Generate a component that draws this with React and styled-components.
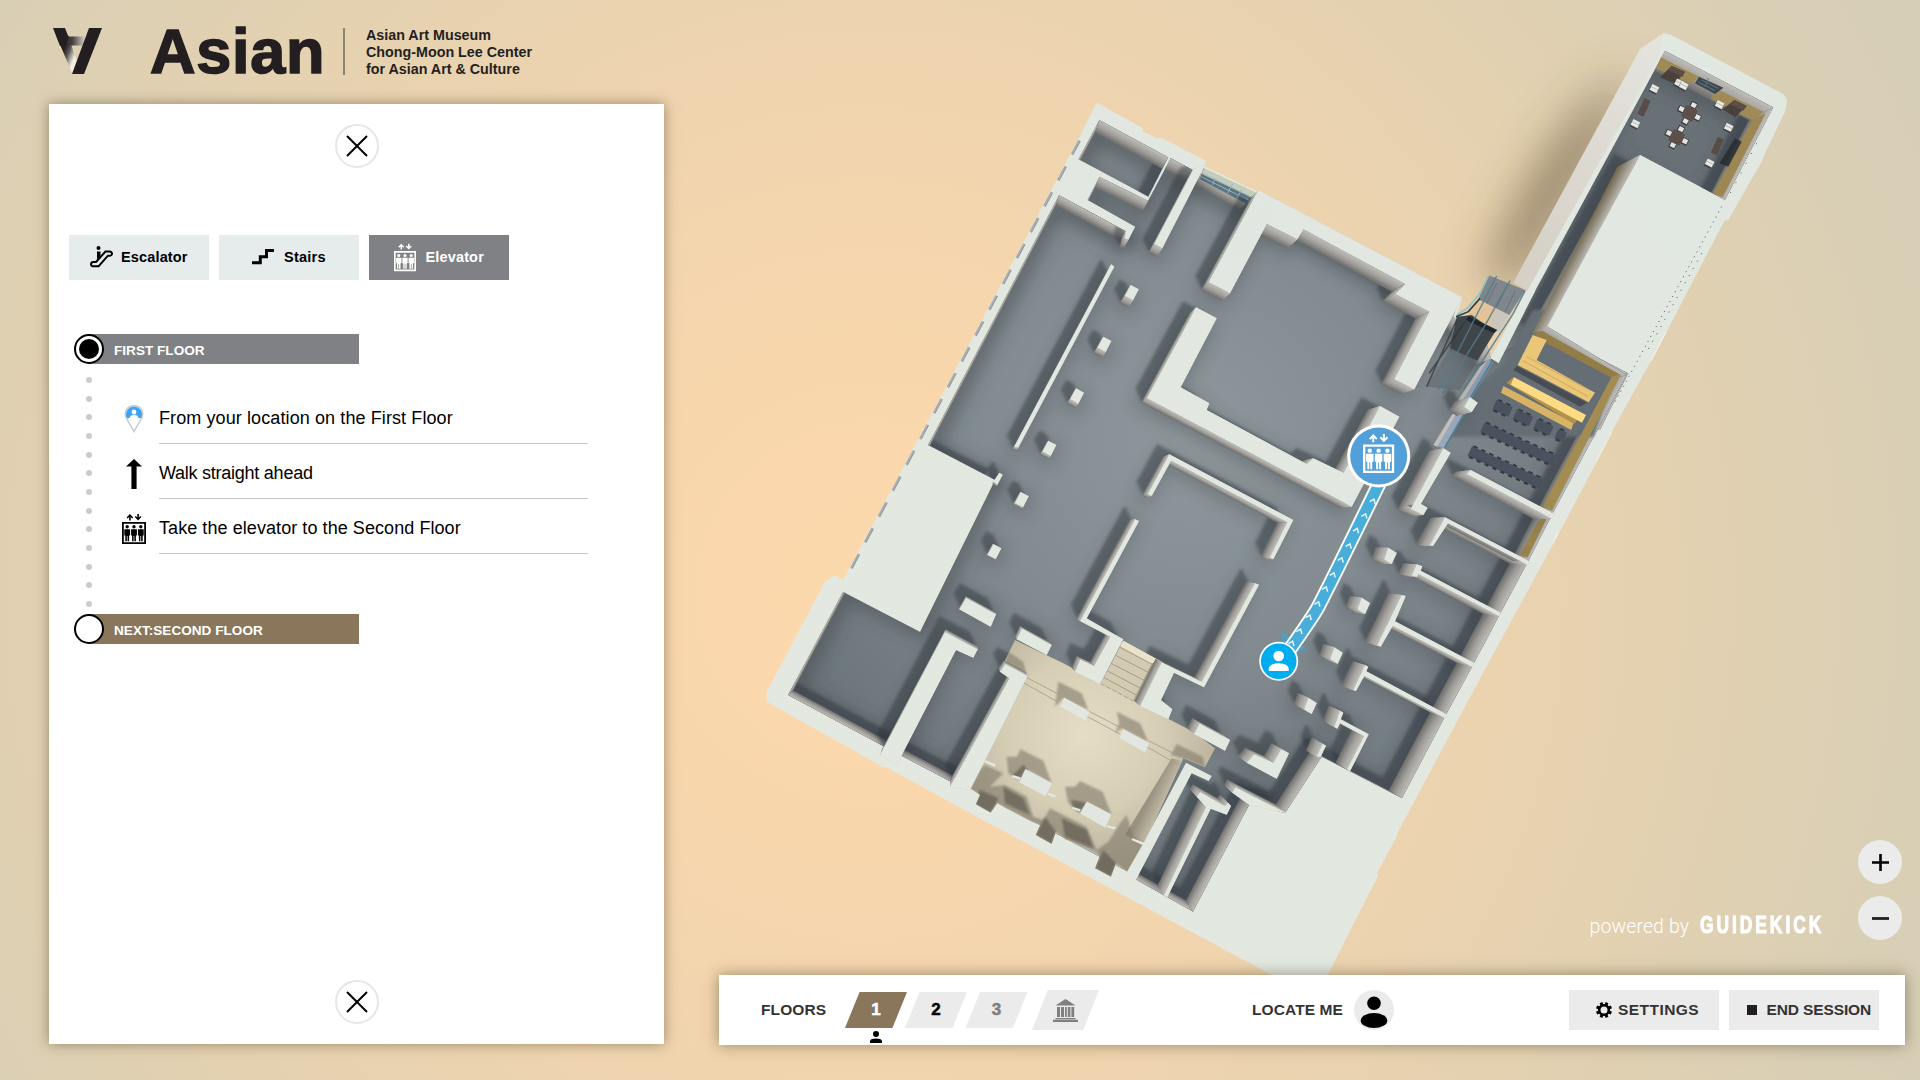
import React from "react";
import styled, { createGlobalStyle } from "styled-components";

const GlobalStyle = createGlobalStyle`
  *, *::before, *::after { box-sizing: border-box; }
  html, body { margin: 0; padding: 0; background: #ecd3ae; }
  body { font-family: "Liberation Sans", Arial, sans-serif; color: #000; overflow: hidden; }
  button { font: inherit; border: 0; padding: 0; margin: 0; background: none; cursor: pointer; }
`;

/* ------------------------------------------------------------------ */
/* Map geometry                                                        */
/* ------------------------------------------------------------------ */

const EYE = [960, 540];
const HEIGHT = 0.03;
const SUN = [-6, -13];

/* Survey tiles: every tile stores points at three units per map unit. */
const TILE = {
  nw: [750, 80],
  n: [1100, 150],
  ne: [1400, 20],
  e: [1350, 260],
  sw: [750, 520],
  c: [1100, 440],
};

const poly = (tile, text) =>
  text
    .trim()
    .split(/\s+/)
    .map((p) => {
      const [x, y] = p.split(",").map(Number);
      return tile ? [TILE[tile][0] + x / 3, TILE[tile][1] + y / 3] : [x, y];
    });

const str = (pts) => pts.map((p) => p[0].toFixed(1) + "," + p[1].toFixed(1)).join(" ");
const sink = (p, k) => [EYE[0] + (p[0] - EYE[0]) * (1 - k), EYE[1] + (p[1] - EYE[1]) * (1 - k)];
const dist = (p) => Math.hypot(p[0] - EYE[0], p[1] - EYE[1]);

const leftPillar = (x, y) =>
  poly("nw", `${x},${y} ${x + 24},${y + 13} ${x + 7},${y + 46} ${x - 18},${y + 33}`);
const rightPillar = (x, y) =>
  poly("c", `${x},${y} ${x + 25},${y + 16} ${x + 10},${y + 49} ${x - 13},${y + 35}`);

const SHELL_MAIN = poly(
  null,
  "1096.7,102.7 1143.3,128.3 1142,131 1158,139 1160,137 1206,160.7 1204,166 1256,191 1258.3,190 1462.3,297.3 1457,315 1486,338 1491,359 1600,400 1612,430 1597,461 1557,537 1490,660 1398,831.7 1397,836 1377,873 1378,876 1320,990 1300,990 1206.7,940 976.7,816.7 886,767 883,767 766.7,701.7 766.7,691.7 825,581.7 835,575 843,580 1078,140"
);
const SHELL_WING = poly(
  "ne",
  "790,40 812,44 1150,222 1162,240 1155,275 1097,395 1085,425 1050,485 985,600 973,603 798,938 750,1028 638,1230 500,1260 272,1015 380,812 770,110 725,85"
);
const FLOOR_MAIN = poly(
  null,
  "1059,195 1126.7,231.7 1135,226.7 1087.5,200 1099.3,176.7 1148,200.7 1170.7,158 1193,170 1203,174 1248,200 1258,192 1460,298 1453,317 1486,340 1491,359 1545,325 1626.7,375 1553,513 1528,561.7 1500,614 1473,665 1445,716.7 1402,798.3 1321.7,756.7 1285,813.3 1250,803.3 1193,911.7 1136.7,880 1128,871.7 970,788 955,784 883,746 788,695 843,591.7 920,631.7 995,480 928,445"
);
const FLOOR_NW = poly("nw", "1048,120 1255,232 1195,350 985,238");
const FLOOR_WING = poly(
  "ne",
  "795,92 1120,262 975,540 720,405 430,930 685,1060 600,1230 150,1230 290,1025"
);

const WALLS = [
  poly("nw", "1083,553 1093,560 805,1103 792,1100"),
  poly("nw", "1330,268 1365,255 1237,505 1212,492"),
  poly("nw", "1128,452 1155,440 1136,478 1124,476"),
  poly("nw", "748,1178 758,1184 742,1215 730,1205"),
  leftPillar(1142, 615),
  leftPillar(1060, 770),
  leftPillar(978, 925),
  leftPillar(895, 1082),
  leftPillar(812, 1236),
  leftPillar(730, 1392),
  poly("n", "475,120 1087,442 943,718 882,688 988,485 885,432 915,402 610,238 592,268 500,222 390,430 325,397"),
  poly("n", "288,472 350,505 242,712 328,760 320,780 620,942 640,925 730,968 840,768 898,800 755,1070 140,745"),
  poly("c", "208,43 580,240 520,358 510,352 562,247 213,62 155,168 143,162"),
  poly("sw", "1155,-2 1167,3 1010,295 1120,358 1050,492 975,455 990,418 1032,437 1080,350 990,303"),
  poly("c", "465,430 477,434 312,742 222,698 183,780 217,808 205,838 120,798 185,667 305,725"),
  poly("c", "1030,25 1052,38 962,192 983,203 970,225 932,207"),
  poly("e", "285,772 540,905 532,914 294,790 249,858 240,856"),
  poly("c", "950,373 967,379 962,392 1205,520 1198,529 955,402 950,411 935,406"),
  poly("c", "905,465 917,468 885,544 1124,670 1116,680 878,558 842,620 832,616"),
  poly("c", "795,675 805,680 799,694 1042,824 1035,834 793,708 768,753 760,751"),
  poly("c", "720,812 730,818 722,838 806,883 750,994 742,988 792,889 720,850 712,866 703,860"),
  rightPillar(865, 323),
  rightPillar(785, 473),
  rightPillar(703, 622),
  rightPillar(625, 773),
  poly("c", "462,942 520,968 543,928 567,940 530,1016 440,968"),
  poly("c", "668,911 678,917 662,950 650,950"),
  poly("c", "405,1040 560,1120 447,1094 397,1058"),
  poly("sw", "1340,830 1350,815 1425,858 1434,848 1443,858 1430,884 1382,866 1252,1132 1242,1126 1368,862"),
  poly("sw", "585,335 683,388 670,413 618,390 440,735 390,705"),
  poly("sw", "765,432 833,468 660,810 600,800 778,475 750,455"),
  poly("sw", "648,233 738,283 722,320 628,268"),
  poly("sw", "815,325 905,375 890,405 800,358"),
  poly("sw", "1348,610 1440,660 1425,692 1332,642"),
  poly("e", "362,630 614,762 606,776 350,642"),
  poly("n", "1110,742 1133,758 1115,786 1092,770"),
];

const HALL = poly(
  "sw",
  "795,360 940,430 1052,490 1170,553 1330,635 1395,685 1365,742 1300,715 1185,968 1135,1058 1098,1030 1083,1070 1035,1045 1048,1012 1040,995 945,958 918,935 905,972 857,945 870,915 845,905 765,863 742,850 722,878 677,853 690,825 660,805 833,468 760,432"
);
const HALL_EAST_WALL = poly("sw", "1308,728 1385,768 1376,783 1325,760 1150,1095 1120,1075 1183,965");
const HALL_PILLARS = [
  poly("sw", "942,533 1018,575 1006,600 932,560"),
  poly("sw", "1120,628 1197,670 1186,697 1110,655"),
  poly("sw", "826,747 906,790 886,829 808,787"),
  poly("sw", "1010,845 1084,883 1066,923 990,880"),
];
const HALL_SHADES = [
  "775,395 820,425 830,465 765,430",
  "925,485 995,520 1015,570 940,535 915,560 920,525",
  "1100,575 1170,610 1195,665 1115,625 1095,640 1108,610",
  "1280,672 1358,710 1365,742 1300,715 1262,705",
  "812,688 880,722 905,790 825,745 805,780 775,760 770,710 800,710",
  "990,783 1058,815 1085,885 1010,845 990,875 955,850 945,800 975,800",
  "705,735 760,760 720,800 765,795 830,830 850,890 880,900 900,865 940,885 1010,920 1040,990 1075,965 1110,910 1130,885 1150,950 1185,968 1135,1058 1098,1030 1083,1070 1035,1045 1048,1012 1040,995 945,958 918,935 905,972 857,945 870,915 845,905 765,863 742,850 722,878 677,853 690,825 660,805 690,750",
];
const HALL_DEEP = [
  "690,810 745,835 722,878 677,853",
  "885,890 918,935 905,972 857,945",
  "1060,990 1098,1030 1083,1070 1035,1045",
  "760,800 820,835 840,885 765,850",
  "935,895 1010,930 1030,985 945,950",
  "820,735 835,750 812,778 788,765",
  "965,840 1010,848 990,880 968,862",
];

const SEAT_ROWS = [
  { x: 440, y: 424, seats: [0, 1, 2.6, 3.6, 5.2, 6.2, 7.9] },
  { x: 404, y: 492, seats: [0, 1, 2, 3, 4, 5, 6, 7, 8] },
  { x: 366, y: 563, seats: [0, 1, 2, 3, 4, 5, 6, 7, 8] },
];

const tileTransform = (tile) => `translate(${TILE[tile][0]} ${TILE[tile][1]}) scale(${1 / 3})`;

function Sides({ id, points, depth = HEIGHT }) {
  const faces = points
    .map((a, i) => {
      const b = points[(i + 1) % points.length];
      const m = [(a[0] + b[0]) / 2, (a[1] + b[1]) / 2];
      const mb = sink(m, depth);
      const len = Math.hypot(b[0] - a[0], b[1] - a[1]) || 1;
      const n = [(b[1] - a[1]) / len, -(b[0] - a[0]) / len];
      const drop = (mb[0] - m[0]) * n[0] + (mb[1] - m[1]) * n[1];
      return {
        key: `${id}-${i}`,
        d: dist(m),
        quad: str([a, b, sink(b, depth), sink(a, depth)]),
        from: m,
        to: [m[0] + n[0] * drop, m[1] + n[1] * drop],
      };
    })
    .sort((p, q) => q.d - p.d);
  return (
    <g>
      {faces.map((f) => (
        <React.Fragment key={f.key}>
          <linearGradient id={f.key} gradientUnits="userSpaceOnUse" x1={f.from[0]} y1={f.from[1]} x2={f.to[0]} y2={f.to[1]}>
            <stop offset="0" stopColor="#bfbdb8" />
            <stop offset="0.5" stopColor="#a19f9b" />
            <stop offset="1" stopColor="#6d6d6b" />
          </linearGradient>
          <polygon points={f.quad} fill={`url(#${f.key})`} />
        </React.Fragment>
      ))}
    </g>
  );
}

function Room({ id, points }) {
  const base = points.map((p) => sink(p, HEIGHT));
  const lit = base.map((p) => [p[0] + SUN[0], p[1] + SUN[1]]);
  const ring = "M0 0H1920V1080H0Z M" + str(lit).replace(/ /g, " L") + "Z";
  return (
    <g clipPath={`url(#clip-${id})`}>
      <clipPath id={`clip-${id}`}>
        <polygon points={str(points)} />
      </clipPath>
      <polygon points={str(points)} fill="url(#floor)" />
      <g filter="url(#soft10)">
        <polygon points={str(base)} fill="none" stroke="#3f474c" strokeOpacity="0.6" strokeWidth="16" />
      </g>
      <path d={ring} fillRule="evenodd" fill="#32393f" fillOpacity="0.5" filter="url(#soft2)" />
      <Sides id={id} points={points} />
    </g>
  );
}

function ElevatorGlyph({ color }) {
  return (
    <g fill={color}>
      <path d="M0 8H24V30H0Z M1.8 9.8V28.2H22.2V9.8Z" fillRule="evenodd" />
      {[5.2, 12, 18.8].map((x) => (
        <g key={x} transform={`translate(${x} 0)`}>
          <circle cx="0" cy="12.8" r="1.7" />
          <path d="M-2.9 15.2H2.9V21.4H1.9V27.2H0.35V22H-0.35V27.2H-1.9V21.4H-2.9Z" />
        </g>
      ))}
      <path d="M7.9 0L11.2 3.4L10.2 4.4L8.7 3V6.4H7.1V3L5.6 4.4L4.6 3.4Z" />
      <path d="M16.1 6.4L12.8 3L13.8 2L15.3 3.4V0H16.9V3.4L18.4 2L19.4 3Z" />
    </g>
  );
}

function Lounge() {
  const tables = [[868, 280], [830, 352]];
  const chairs = [[762, 207], [705, 312], [836, 190], [850, 198], [958, 255], [985, 323], [928, 430]];
  return (
    <g transform={tileTransform("ne")}>
      <polygon points="783,112 897,170 873,192 768,145" fill="#a08b56" />
      <polygon points="953,208 1090,275 1055,300 932,236" fill="#a08b56" />
      <polygon points="1097,280 968,532 940,520 1058,298" fill="#9c8752" />
      <polygon points="1005,355 1025,365 985,440 958,430" fill="#272c30" opacity="0.85" />
      <polygon points="897,170 970,203 945,222 885,190" fill="#3c4751" />
      <path d="M905 180L955 205M895 186L945 212M925 175L915 200" stroke="#66747d" strokeWidth="3" />
      <polygon points="815,138 855,155 825,192 780,172" fill="#4a403c" />
      <polygon points="1003,240 1040,258 1005,292 968,268" fill="#4a403c" />
      <polygon points="815,138 855,155 848,170 802,150" fill="#5a4e48" />
      <polygon points="1003,240 1040,258 1030,272 990,252" fill="#5a4e48" />
      {[[732, 262], [952, 378]].map(([x, y]) => (
        <rect key={x} x="-10" y="-26" width="20" height="52" rx="3" fill="#584c46" transform={`translate(${x} ${y}) rotate(24)`} />
      ))}
      {tables.map(([x, y]) => (
        <g key={x} transform={`translate(${x} ${y}) rotate(27)`}>
          {[[0, -27], [27, 0], [0, 27], [-27, 0]].map(([a, b]) => (
            <g key={a + "," + b}>
              <rect x={a - 10} y={b - 10} width="20" height="20" fill="#35393c" />
              <rect x={a - 7} y={b - 8} width="15" height="14" fill="#e3e3df" />
            </g>
          ))}
          <rect x="-19" y="-19" width="38" height="38" fill="#5d504a" />
        </g>
      ))}
      {chairs.map(([x, y]) => (
        <g key={x} transform={`translate(${x} ${y}) rotate(27)`}>
          <rect x="-12" y="-9" width="24" height="22" fill="#3d4347" />
          <rect x="-11" y="-11" width="23" height="19" fill="#e9e9e3" />
          <rect x="-11" y="-4" width="23" height="3" fill="#b9b9b2" />
        </g>
      ))}
    </g>
  );
}

function Auditorium() {
  return (
    <g transform={tileTransform("e")}>
      <polygon points="550,222 575,212 812,345 782,352 590,250" fill="#927d47" />
      <polygon points="785,350 812,345 606,752 578,740" fill="#a38c51" />
      <polygon points="572,770 592,772 533,892 510,885" fill="#9a844c" />
      <polygon points="500,318 712,428 690,440 490,330" fill="#32373b" opacity="0.6" />
      <polygon points="548,225 590,240 560,300 735,398 716,427 503,315" fill="#eac678" />
      <path d="M530 290L720 392M518 302L715 410" stroke="#d1a95c" strokeWidth="3" />
      <polygon points="460,378 670,488 664,510 453,398" fill="#d9b365" />
      <polygon points="470,368 490,352 690,470 672,492" fill="#b5924b" />
      <polygon points="492,352 708,465 696,488 482,374" fill="#fcdb84" />
      {SEAT_ROWS.map((row) => (
        <g key={row.y} transform={`translate(${row.x} ${row.y}) rotate(25)`}>
          {row.seats.map((s) => (
            <g key={s} transform={`translate(${s * 26} 0)`}>
              <rect x="2" y="-9" width="14" height="8" fill="#343a41" />
              <rect x="-2" y="-4" width="27" height="31" fill="#4a5260" />
              <rect x="3" y="25" width="13" height="7" fill="#363c43" />
              <path d="M23.5 -4V26" stroke="#414957" strokeWidth="1.2" />
            </g>
          ))}
        </g>
      ))}
      <polygon points="322,642 350,632 592,772 575,775" fill="#8b7844" />
    </g>
  );
}

function Escalators() {
  return (
    <g transform={tileTransform("ne")}>
      <polygon points="235,838 330,880 290,935 200,892" fill="#e2c39a" />
      <polygon points="290,865 330,883 297,935 268,915" fill="#c9c6c0" />
      <polygon points="265,765 375,810 328,885 235,838" fill="#7f868c" />
      <path d="M290 790L260 850M320 800L290 862M345 815L315 875" stroke="#697178" strokeWidth="3" />
      <polygon points="170,890 215,885 285,935 232,1022 150,985" fill="#3f4549" />
      <polygon points="150,985 232,1022 180,1110 80,1100" fill="#4d5458" opacity="0.35" />
      <polygon points="205,888 292,930 282,940 198,900" fill="#20272a" />
      <path d="M170 900L80 1100M195 905L88 1060" stroke="#30383c" strokeWidth="5" opacity="0.7" />
      <g stroke="#527c8c" strokeWidth="4.5" opacity="0.85" fill="none">
        <path d="M290 768L222 900L115 1110" />
        <path d="M330 782L250 925L128 1120" />
        <path d="M375 812L340 880L190 1110" />
      </g>
      <path d="M267 765L240 820L205 862L170 885" stroke="#8fc4c2" strokeWidth="5" fill="none" />
      <path d="M240 835L205 875L168 890" stroke="#2f3c42" strokeWidth="5" fill="none" />
    </g>
  );
}

function Hall() {
  return (
    <g>
      <clipPath id="clip-hall">
        <polygon points={str(HALL)} />
      </clipPath>
      <polygon points={str(HALL)} fill="url(#hall)" />
      <g clipPath="url(#clip-hall)">
        <g transform={tileTransform("sw")}>
          <polygon points="1265,715 1310,725 1190,975 1125,945" fill="url(#hallEast)" />
          <g fill="#7c7767" fillOpacity="0.58" filter="url(#soft3)">
            {HALL_SHADES.map((p) => <polygon key={p} points={p} />)}
          </g>
          <g fill="#565247" fillOpacity="0.6" filter="url(#soft3)">
            {HALL_DEEP.map((p) => <polygon key={p} points={p} />)}
          </g>
          <path d="M825 470L930 525M820 488L922 545M1010 570L1110 622M1012 590L1110 642M1195 662L1290 710M1190 680L1285 735" stroke="#a59e8a" strokeWidth="2.5" fill="none" />
          <path d="M1052 490L1170 553" stroke="#827b69" strokeWidth="3" strokeDasharray="12 8" />
        </g>
      </g>
      <g transform={tileTransform("sw")}>
        <polygon points="1120,362 1235,425 1170,553 1052,490" fill="#d3cab2" />
        <polygon points="1120,362 1235,425 1222,440 1110,378" fill="#ebe2ca" />
        <path d="M1106 380L1222 441M1095 405L1212 466M1083 430L1200 490M1072 453L1188 513M1062 473L1178 535" stroke="#a49d89" strokeWidth="3" />
        <polygon points="1240,425 1205,430 1150,540 1172,555" fill="#aaa18b" />
        <polygon points="705,720 738,733 733,740 702,726" fill="#e2e7e1" />
        <polygon points="788,765 812,772 810,780 786,772" fill="#e2e7e1" />
        <polygon points="895,818 918,826 914,833 893,825" fill="#e2e7e1" />
        <polygon points="968,860 992,868 990,875 966,866" fill="#e2e7e1" />
        <polygon points="1072,915 1098,922 1094,928 1070,922" fill="#e2e7e1" />
        <polygon points="1148,955 1185,968 1178,975 1144,960" fill="#e2e7e1" />
      </g>
      {HALL_PILLARS.map((p, i) => <polygon key={i} points={str(p)} fill="#e1e6e1" />)}
      <polygon points={str(HALL_EAST_WALL)} fill="url(#top)" />
    </g>
  );
}

function FloorMap() {
  const chevrons = [
    [820, 182], [795, 226], [770, 270], [748, 316], [724, 358], [700, 403], [677, 445], [654, 490], [628, 530], [600, 572], [576, 608],
  ];
  const route = "M838 130L735 340Q690 432 655 500Q640 528 568 630";
  return (
    <MapCanvas viewBox="0 0 1920 1080" aria-label="First floor map">
      <defs>
        <filter id="soft2" x="-20%" y="-20%" width="140%" height="140%"><feGaussianBlur stdDeviation="1.6" /></filter>
        <filter id="soft3" x="-20%" y="-20%" width="140%" height="140%"><feGaussianBlur stdDeviation="3" /></filter>
        <filter id="soft10" x="-20%" y="-20%" width="140%" height="140%"><feGaussianBlur stdDeviation="9" /></filter>
        <filter id="soft24" x="-80%" y="-80%" width="260%" height="260%"><feGaussianBlur stdDeviation="25" /></filter>
        <clipPath id="clip-floors">
          <polygon points={str(FLOOR_MAIN)} />
        </clipPath>
        <linearGradient id="top" gradientUnits="userSpaceOnUse" x1="800" y1="900" x2="1700" y2="200">
          <stop offset="0" stopColor="#e3e8e0" />
          <stop offset="1" stopColor="#e1e7e1" />
        </linearGradient>
        <radialGradient id="floor" gradientUnits="userSpaceOnUse" cx="1190" cy="440" r="480">
          <stop offset="0" stopColor="#8e979b" />
          <stop offset="0.45" stopColor="#828b90" />
          <stop offset="1" stopColor="#687176" />
        </radialGradient>
        <radialGradient id="hall" gradientUnits="userSpaceOnUse" cx="1085" cy="735" r="130">
          <stop offset="0" stopColor="#e6ddc6" />
          <stop offset="0.6" stopColor="#d6cdb5" />
          <stop offset="1" stopColor="#bdb59f" />
        </radialGradient>
        <linearGradient id="hallEast" gradientUnits="userSpaceOnUse" x1="1200" y1="830" x2="1245" y2="852">
          <stop offset="0" stopColor="#989280" />
          <stop offset="1" stopColor="#c5bea9" />
        </linearGradient>
        <linearGradient id="wingSide" gradientUnits="userSpaceOnUse" x1="1650" y1="50" x2="1520" y2="290">
          <stop offset="0" stopColor="#e3e2dc" />
          <stop offset="1" stopColor="#d5cfc5" />
        </linearGradient>
        <linearGradient id="theatreSide" gradientUnits="userSpaceOnUse" x1="1593" y1="243" x2="1578" y2="235">
          <stop offset="0" stopColor="#bcbab3" />
          <stop offset="0.45" stopColor="#918b7c" />
          <stop offset="1" stopColor="#5f5434" />
        </linearGradient>
      </defs>

      <polygon
        points={str(poly("ne", "650,200 560,280 480,380 390,520 300,700 260,790 340,790 480,560 700,200"))}
        fill="#5a4a2e"
        fillOpacity="0.82"
        filter="url(#soft24)"
      />

      <polygon points={str(SHELL_MAIN)} fill="url(#top)" />
      <polygon points={str(SHELL_WING)} fill="url(#top)" />
      <polygon points={str(poly("ne", "720,88 790,40 775,112 382,812 340,788"))} fill="url(#wingSide)" />

      <g transform={tileTransform("nw")}>
        <path d="M988 181L302 1467" stroke="#a9aeb1" strokeWidth="7" strokeDasharray="48 39.9" />
        <path d="M991 183L305 1469" stroke="#868e94" strokeWidth="2.5" strokeDasharray="48 39.9" />
      </g>

      <Room id="room-nw" points={FLOOR_NW} />
      <Room id="room-wing" points={FLOOR_WING} />
      <Room id="room-main" points={FLOOR_MAIN} />
      <polygon
        points={str(poly("ne", "398,870 310,1030 225,1100 140,1250 580,1250 625,1120 640,1070 425,940 440,870"))}
        fill="#666e74"
        filter="url(#soft2)"
      />
      <polygon points={str(poly("ne", "720,405 435,932 398,938 652,440"))} fill="url(#theatreSide)" />
      <polygon points={str(poly("ne", "378,812 406,812 296,1030 272,1015"))} fill="#e1e7e1" />

      <g transform={tileTransform("n")}>
        <polygon points="310,55 465,128 440,162 300,88" fill="#5a7583" />
        <polygon points="312,55 468,128 455,142 305,72" fill="#c3cdb9" />
        <path d="M308 70L455 142M304 80L448 152M345 85L338 105M398 102L382 130M425 120L410 145" stroke="#9db4ba" strokeWidth="3" fill="none" />
      </g>

      <Escalators />
      <Lounge />
      <Auditorium />

      <g clipPath="url(#clip-floors)">
        <g opacity="0.3" filter="url(#soft10)">
          {WALLS.map((w, i) => (
            <polygon key={i} points={str(w.map((p) => sink(p, HEIGHT)))} fill="#2b3237" stroke="#2b3237" strokeWidth="10" />
          ))}
        </g>
        <g opacity="0.42" filter="url(#soft2)">
          {WALLS.map((w, i) =>
            [0.25, 0.5, 0.75, 1].map((t) => (
              <polygon
                key={i + "-" + t}
                points={str(w.map((p) => sink(p, HEIGHT)).map((p) => [p[0] + SUN[0] * t, p[1] + SUN[1] * t]))}
                fill="#2b3237"
              />
            ))
          )}
        </g>
      </g>

      <g transform={tileTransform("n")}>
        <polygon points="1165,628 1180,636 1112,748 1085,742" fill="#8d9bb0" />
        <path d="M1176 634L1110 746" stroke="#4c7f96" strokeWidth="5" />
        <polygon points="1165,628 1140,650 1075,750 1090,748" fill="#b7b4ae" />
        <polygon points="1072,782 1096,790 1032,895 1008,888" fill="#9aa7ba" />
        <path d="M1092 792L1034 893" stroke="#4c7f96" strokeWidth="5" />
        <polygon points="1075,780 1055,795 1000,885 1012,890" fill="#c2bfb8" />
      </g>

      <Hall />

      {WALLS.map((w, i) => (
        <React.Fragment key={i}>
          <Sides id={"wall" + i} points={w} />
          <polygon points={str(w)} fill="url(#top)" />
        </React.Fragment>
      ))}
      {HALL_PILLARS.slice(0, 2).map((p, i) => <polygon key={i} points={str(p)} fill="#e1e6e1" />)}

      <g transform={tileTransform("ne")} fill="none" stroke="#4e5356" strokeWidth="3" strokeDasharray="3 14">
        <path d="M965 560L640 1155" />
        <path d="M1070 370L980 540" strokeDasharray="3 30" />
        <path d="M905 700L735 1005" strokeDasharray="3 22" />
      </g>
      <g transform={tileTransform("e")}>
        <path d="M660 650L540 880M500 960L400 1160" stroke="#9aa09d" strokeWidth="2" strokeDasharray="3 7" fill="none" />
        <path d="M948 215L903 303M787 512L739 604M624 815L609 850" stroke="#f4f6f2" strokeWidth="3" fill="none" />
      </g>

      <g transform={tileTransform("c")}>
        <path d="M546 572L580 600L624 628L590 640L545 660Z" fill="#3aa9dc" opacity="0.6" />
        <path d={route} fill="none" stroke="#fff" strokeWidth="44" />
        <path d={route} fill="none" stroke="#48add9" strokeWidth="33" />
        {chevrons.map(([x, y]) => (
          <path key={y} d="M-9 7L0 -5L9 7" transform={`translate(${x} ${y}) rotate(22)`} stroke="#e8f6fc" strokeWidth="4.5" fill="none" />
        ))}
      </g>
      <circle cx="1378.7" cy="456" r="31.5" fill="#fff" />
      <circle cx="1378.7" cy="456" r="28.5" fill="#529fd9" />
      <g transform="translate(1363 434) scale(1.3)"><ElevatorGlyph color="#fff" /></g>
      <circle cx="1278.7" cy="661.3" r="19.5" fill="#fff" />
      <circle cx="1278.7" cy="661.3" r="17.8" fill="#00adee" />
      <circle cx="1278.7" cy="656" r="5.3" fill="#fff" />
      <path d="M1268.7 671V668.5Q1269.5 663.5 1278.7 663.3Q1288 663.5 1288.7 668.5V671Z" fill="#fff" />
    </MapCanvas>
  );
}

/* ------------------------------------------------------------------ */
/* Styled parts                                                        */
/* ------------------------------------------------------------------ */

const Screen = styled.main`
  position: relative;
  display: flex;
  width: 1920px;
  height: 1080px;
  overflow: hidden;
  background: radial-gradient(circle at 870px 595px, #fcd8ad 0, #fad7ac 170px, #f2d5ae 430px, #ecd3af 600px, #e6d2b0 740px, #dfd0b2 900px, #d9cfb5 1060px, #d4cdb6 1250px);
`;

const MapCanvas = styled.svg`
  position: absolute;
  inset: 0;
  width: 100%;
  height: 100%;
`;

const SideColumn = styled.div`
  position: relative;
  display: flex;
  flex-direction: column;
  width: 615px;
  margin-left: 49px;
`;

const Brand = styled.header`
  display: flex;
  height: 104px;
  padding: 28px 0 0 4px;
  color: #231f20;
`;

const BrandMark = styled.svg`
  width: 49px;
  height: 46px;
`;

const BrandName = styled.div`
  margin-left: 48px;
  width: 174px;
  font-size: 63px;
  font-weight: 700;
  line-height: 47px;
  letter-spacing: 0.7px;
  -webkit-text-stroke: 1.6px #231f20;
`;

const BrandRule = styled.div`
  width: 2px;
  height: 47px;
  margin-left: 19px;
  background: #8d8373;
`;

const BrandLines = styled.div`
  margin: -1px 0 0 21px;
  font-size: 14.3px;
  font-weight: 700;
  line-height: 17.1px;
  white-space: nowrap;
`;

const Panel = styled.section`
  display: flex;
  flex-direction: column;
  align-items: center;
  height: 940px;
  padding: 20px 20px 20px;
  background: #fff;
  box-shadow: 0 0 12px rgba(70, 55, 30, 0.5);
`;

const CloseButton = styled.button`
  display: grid;
  place-items: center;
  flex: none;
  width: 44px;
  height: 44px;
  border: 2px solid #e6e6e6;
  border-radius: 50%;
`;

const PanelBody = styled.div`
  align-self: stretch;
  flex: 1;
  padding-top: 67px;
`;

const Modes = styled.div`
  display: flex;
  gap: 10px;
`;

const ModeButton = styled.button`
  display: flex;
  align-items: center;
  width: 140px;
  height: 45px;
  padding: 0 0 1px ${(p) => p.$inset}px;
  gap: ${(p) => p.$gap}px;
  background: ${(p) => (p.$active ? "#808184" : "#e6ebeb")};
  color: ${(p) => (p.$active ? "#fff" : "#000")};
  font-size: 14.5px;
  font-weight: 700;
  letter-spacing: ${(p) => p.$track || 0.1}px;
`;

const Route = styled.div`
  display: grid;
  grid-template-columns: 30px 1fr;
  margin: 54px 0 0 5px;
`;

const StopDot = styled.div`
  display: grid;
  place-items: center;
  width: 30px;
  height: 30px;
  border: 2.5px solid #000;
  border-radius: 50%;
  background: #fff;
  z-index: 1;

  &::after {
    content: "";
    width: ${(p) => (p.$current ? 20 : 0)}px;
    height: ${(p) => (p.$current ? 20 : 0)}px;
    border-radius: 50%;
    background: #000;
  }
`;

const StopLabel = styled.div`
  width: 270px;
  height: 30px;
  margin-left: -15px;
  padding-left: 25px;
  line-height: 33px;
  background: ${(p) => (p.$current ? "#808184" : "#8a775b")};
  color: #fff;
  font-size: 13.6px;
  font-weight: 700;
`;

const DotTrail = styled.div`
  display: flex;
  flex-direction: column;
  justify-content: space-between;
  align-items: center;
  padding: 13px 0 7px;
`;

const TrailDot = styled.i`
  width: 6px;
  height: 6px;
  border-radius: 50%;
  background: #ccc;
`;

const Steps = styled.ul`
  list-style: none;
  height: 250px;
  margin: 0;
  padding: 25px 0 0 18px;
`;

const Step = styled.li`
  display: flex;
  height: 55px;
`;

const StepIcon = styled.svg`
  width: 24px;
  height: 30px;
  margin-top: 15px;
`;

const StepText = styled.span`
  width: 429px;
  margin-left: 13px;
  padding-top: 18px;
  border-bottom: 1px solid #c8c8c8;
  font-size: 18px;
  line-height: 22px;
  letter-spacing: ${(p) => p.$track ?? 0.1}px;
`;

const MainColumn = styled.div`
  position: relative;
  display: flex;
  flex: 1;
  flex-direction: column;
  justify-content: flex-end;
  margin: 0 15px 35px 55px;
`;

const MapFooter = styled.div`
  display: flex;
  justify-content: flex-end;
  align-items: flex-end;
  height: 135px;
  padding: 0 3px 35px 0;
`;

const Powered = styled.div`
  display: flex;
  align-items: baseline;
  margin-right: 38px;
  padding-bottom: 1px;
  color: #fff;
`;

const PoweredBy = styled.span`
  width: 110px;
  font-family: Roboto, "Open Sans", sans-serif;
  font-size: 19.5px;
  font-weight: 300;
  letter-spacing: 0.1px;
`;

const PoweredBrand = styled.span`
  width: 120.5px;
  font-size: 23.5px;
  font-weight: 700;
  letter-spacing: 4px;
  white-space: nowrap;
  transform: scaleX(0.74);
  transform-origin: left;
  -webkit-text-stroke: 1.1px #fff;
`;

const ZoomStack = styled.div`
  display: flex;
  flex-direction: column;
  gap: 12px;
`;

const ZoomButton = styled.button`
  display: grid;
  place-items: center;
  width: 44px;
  height: 44px;
  border-radius: 50%;
  background: #ebebeb;
`;

const Bar = styled.nav`
  display: flex;
  align-items: center;
  height: 70px;
  padding: 0 26px 0 42px;
  background: #fff;
  box-shadow: 0 0 14px rgba(70, 55, 30, 0.5);
  color: #333;
  font-size: 15.5px;
  font-weight: 700;
`;

const BarLabel = styled.span`
  width: ${(p) => p.$width}px;
  white-space: nowrap;
  letter-spacing: 0.1px;
`;

const Floors = styled.div`
  display: flex;
  align-items: center;
`;

const FloorTab = styled.button`
  position: relative;
  display: grid;
  place-items: center;
  width: ${(p) => (p.$wide ? 67 : 62)}px;
  height: ${(p) => (p.$wide ? 40 : 36)}px;
  margin-left: ${(p) => p.$shift || 0}px;
  color: ${(p) => p.$color};
  font-size: 17px;
  -webkit-text-stroke: 0.5px currentColor;

  &::before {
    content: "";
    position: absolute;
    inset: 0;
    background: ${(p) => (p.$active ? "#8a775b" : "#ebebeb")};
    clip-path: polygon(23.5% 0, 100% 0, 76.5% 100%, 0 100%);
  }

  > * { position: relative; }
`;

const HereMarker = styled.svg`
  && {
    position: absolute;
    top: 39px;
    left: 25px;
    width: 12px;
    height: 12px;
  }
`;

const LocateGroup = styled.div`
  display: flex;
  align-items: center;
  margin-left: 153px;
`;

const Avatar = styled.svg`
  width: 40px;
  height: 40px;
`;

const Actions = styled.div`
  display: flex;
  gap: 10px;
  margin-left: auto;
`;

const ActionButton = styled.button`
  display: flex;
  align-items: center;
  width: 150px;
  height: 40px;
  padding-left: ${(p) => p.$inset}px;
  gap: ${(p) => p.$gap}px;
  background: #ebebeb;
  color: #333;
  white-space: nowrap;
  letter-spacing: ${(p) => p.$track || 0}px;
`;

/* ------------------------------------------------------------------ */

function Close() {
  return (
    <CloseButton aria-label="Close">
      <svg width="22" height="22" viewBox="0 0 22 22">
        <path d="M1 1L21 21M21 1L1 21" stroke="#000" strokeWidth="2" />
      </svg>
    </CloseButton>
  );
}

export default function App() {
  return (
    <Screen>
      <GlobalStyle />
      <FloorMap />

      <SideColumn>
        <Brand>
          <BrandMark viewBox="0 0 49 46">
            <defs>
              <linearGradient id="markLeg" gradientUnits="userSpaceOnUse" x1="9" y1="26" x2="21" y2="31">
                <stop offset="0" stopColor="#231f20" />
                <stop offset="0.4" stopColor="#57534f" />
                <stop offset="1" stopColor="#f4efe6" />
              </linearGradient>
              <linearGradient id="markBar" x1="0" x2="1">
                <stop offset="0" stopColor="#231f20" />
                <stop offset="0.4" stopColor="#4a4644" />
                <stop offset="1" stopColor="#e9e2d3" />
              </linearGradient>
            </defs>
            <path d="M3 7H15L24 34L19.5 46Z" fill="url(#markLeg)" />
            <path d="M11 8.5H33.5L30 17.5H14Z" fill="url(#markBar)" />
            <path d="M0 0H12L15.5 9L12 18H7Z" fill="#231f20" />
            <path d="M36 0H49L31 46H19Z" fill="#231f20" />
          </BrandMark>
          <BrandName>Asian</BrandName>
          <BrandRule />
          <BrandLines>
            Asian Art Museum<br />Chong-Moon Lee Center<br />for Asian Art &amp; Culture
          </BrandLines>
        </Brand>

        <Panel>
          <Close />
          <PanelBody>
            <Modes>
              <ModeButton $inset={21} $gap={8} $track={0.15}>
                <svg width="23" height="22" viewBox="0 0 23 22" fill="none" stroke="#000" strokeWidth="2" strokeLinejoin="round">
                  <circle cx="8.5" cy="2" r="2" fill="#000" stroke="none" />
                  <path d="M7 5.5H10.5V10L7 13.5Z" fill="#000" stroke="none" />
                  <path d="M3.2 16H6L15.5 5.5H20Q22.2 6 22 8Q21.8 9.6 20 9.8H17.8L8.5 20.3H3Q1 20 1 18.2Q1 16.3 3.2 16Z" />
                </svg>
                Escalator
              </ModeButton>
              <ModeButton $inset={33} $gap={10} $track={0.25}>
                <svg width="22" height="16" viewBox="0 0 22 16">
                  <path d="M0 13.7H8.3V7.7H14.5V1.5H22" fill="none" stroke="#000" strokeWidth="3" />
                </svg>
                Stairs
              </ModeButton>
              <ModeButton $active $inset={25} $gap={9.5} $track={0.15}>
                <svg width="22" height="29" viewBox="0 0 24 30"><ElevatorGlyph color="#fff" /></svg>
                Elevator
              </ModeButton>
            </Modes>

            <Route>
              <StopDot $current />
              <StopLabel $current>FIRST FLOOR</StopLabel>
              <DotTrail>
                {Array.from({ length: 13 }, (_, i) => <TrailDot key={i} />)}
              </DotTrail>
              <Steps>
                <Step>
                  <StepIcon viewBox="0 0 24 30">
                    <path d="M12 1.5C17.2 1.5 20.8 5.2 20.8 9.8C20.8 15 15.8 19.5 12 27.5C8.2 19.5 3.2 15 3.2 9.8C3.2 5.2 6.8 1.5 12 1.5Z" fill="#fff" stroke="#c8c8c8" strokeWidth="1.4" />
                    <path d="M5 14.3A8 8 0 1 1 19 14.3Q12 12.5 5 14.3Z" fill="#3fa3f4" />
                    <circle cx="12" cy="8" r="2.4" fill="#fff" />
                    <path d="M7.5 14.4Q8 10.8 12 10.8Q16 10.8 16.5 14.4Z" fill="#fff" />
                  </StepIcon>
                  <StepText>From your location on the First Floor</StepText>
                </Step>
                <Step>
                  <StepIcon viewBox="0 0 24 30">
                    <path d="M12 0L20 7.5H14.6V30H9.4V7.5H4Z" />
                  </StepIcon>
                  <StepText $track={-0.25}>Walk straight ahead</StepText>
                </Step>
                <Step>
                  <StepIcon viewBox="0 0 24 30"><ElevatorGlyph color="#000" /></StepIcon>
                  <StepText $track={0.07}>Take the elevator to the Second Floor</StepText>
                </Step>
              </Steps>
              <StopDot />
              <StopLabel>NEXT:SECOND FLOOR</StopLabel>
            </Route>
          </PanelBody>
          <Close />
        </Panel>
      </SideColumn>

      <MainColumn>
        <MapFooter>
          <Powered>
            <PoweredBy>powered by</PoweredBy>
            <PoweredBrand>GUIDEKICK</PoweredBrand>
          </Powered>
          <ZoomStack>
            <ZoomButton aria-label="Zoom in">
              <svg width="17" height="17" viewBox="0 0 17 17"><path d="M0 8.5H17M8.5 0V17" stroke="#000" strokeWidth="2.6" /></svg>
            </ZoomButton>
            <ZoomButton aria-label="Zoom out">
              <svg width="17" height="17" viewBox="0 0 17 17"><path d="M0 8.5H17" stroke="#231f20" strokeWidth="2.8" /></svg>
            </ZoomButton>
          </ZoomStack>
        </MapFooter>

        <Bar>
          <BarLabel $width={84}>FLOORS</BarLabel>
          <Floors>
            <FloorTab $active $color="#fff">
              <span>1</span>
              <HereMarker viewBox="0 0 12 12"><circle cx="6" cy="3" r="3" /><path d="M0 12V9.5Q1 7.5 6 7.5Q11 7.5 12 9.5V12Z" /></HereMarker>
            </FloorTab>
            <FloorTab $color="#000" $shift={-2}><span>2</span></FloorTab>
            <FloorTab $color="#7f7f7f" $shift={-1.5}><span>3</span></FloorTab>
            <FloorTab $wide $color="#7f7f7f" $shift={4.5}>
              <svg width="25" height="23" viewBox="0 0 25 23" fill="#7f7f7f">
                <path d="M12.5 0L22.5 6.5H2.5Z" />
                <path d="M4 8H7V18H4Z M8 8H11V18H8Z M12 8H13.8V18H12Z M14.8 8H17.4V18H14.8Z M18.4 8H21.2V18H18.4Z" />
                <path d="M2.5 19H22.5V20.2H2.5Z M0 20.8H25V23H0Z" />
              </svg>
            </FloorTab>
          </Floors>
          <LocateGroup>
            <BarLabel $width={102}>LOCATE ME</BarLabel>
            <Avatar viewBox="0 0 40 40">
              <circle cx="20" cy="20" r="20" fill="#ebebeb" />
              <circle cx="20" cy="13.3" r="6.8" />
              <ellipse cx="20" cy="30.5" rx="13.3" ry="7.5" />
            </Avatar>
          </LocateGroup>
          <Actions>
            <ActionButton $inset={27} $gap={6} $track={0.45}>
              <svg width="16" height="16" viewBox="0 0 16 16">
                <circle cx="8" cy="8" r="4.8" fill="none" stroke="#000" strokeWidth="2.6" />
                {[0, 45, 90, 135, 180, 225, 270, 315].map((a) => (
                  <rect key={a} x="6.5" y="0" width="3" height="3.4" transform={`rotate(${a + 22.5} 8 8)`} />
                ))}
              </svg>
              SETTINGS
            </ActionButton>
            <ActionButton $inset={18} $gap={9.5} $track={-0.12}>
              <svg width="10" height="10" viewBox="0 0 10 10"><rect width="10" height="10" fill="#231f20" /></svg>
              END SESSION
            </ActionButton>
          </Actions>
        </Bar>
      </MainColumn>
    </Screen>
  );
}
